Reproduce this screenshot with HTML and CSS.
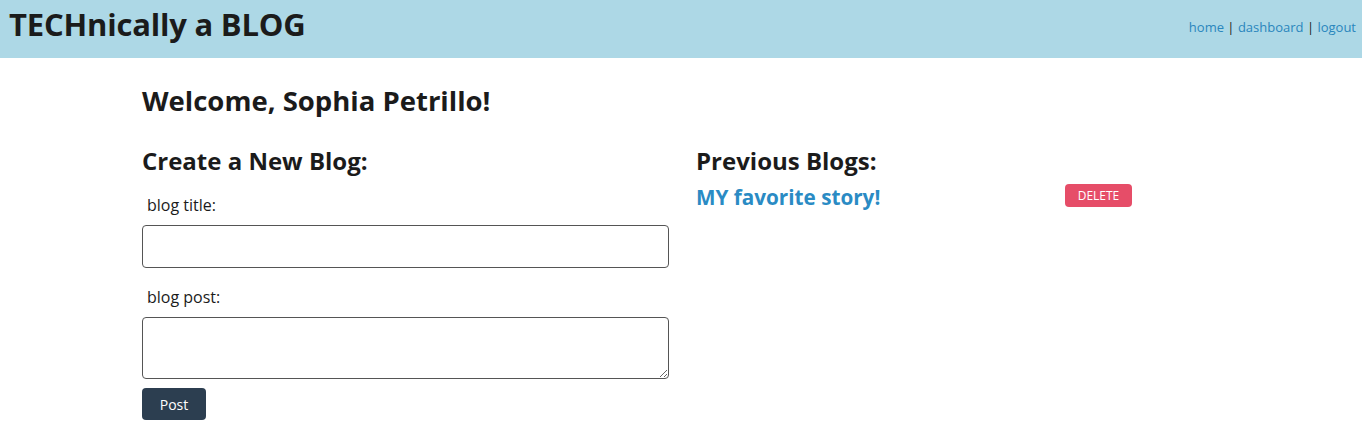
FILE: index.html
```html
<!DOCTYPE html>
<html>
<head>
<meta charset="utf-8">
<link rel="stylesheet" href="styles.css">
</head>
<body>
<header class="topbar">
  <h1 class="brand">TECHnically a BLOG</h1>
  <nav class="nav"><a href="#">home</a> | <a href="#">dashboard</a> | <a href="#">logout</a></nav>
</header>
<main class="container">
  <h2 class="welcome">Welcome, Sophia Petrillo!</h2>
  <div class="columns">
    <section class="col">
      <h3 class="sub">Create a New Blog:</h3>
      <form class="form">
        <label class="label">blog title:</label>
        <input class="field" type="text">
        <label class="label">blog post:</label>
        <textarea class="field area"></textarea>
        <button class="post" type="button">Post</button>
      </form>
    </section>
    <section class="col">
      <h3 class="sub">Previous Blogs:</h3>
      <div class="entry">
        <a class="entry-title" href="#">MY favorite story!</a>
        <button class="delete" type="button">DELETE</button>
      </div>
    </section>
  </div>
</main>
</body>
</html>
```
FILE: styles.css
```css
* { box-sizing: border-box; }
body {
  margin: 0;
  font-family: "Open Sans", "Noto Sans", sans-serif;
  color: #1b1b1b;
  background: #fff;
}
.topbar {
  height: 58px;
  background: #add8e6;
  display: flex;
  justify-content: space-between;
  align-items: flex-start;
  padding: 0 6px 0 9px;
}
.brand {
  margin: 0;
  font-size: 31px;
  font-weight: 700;
  line-height: 48px;
  letter-spacing: -0.2px;
}
.nav {
  padding-top: 18px;
  font-size: 13px;
  color: #1b1b1b;
}
.nav a { color: #2a86bd; text-decoration: none; }
.container {
  padding: 0 142px;
}
.welcome {
  margin: 25px 0 0;
  font-size: 27.5px;
  line-height: 36px;
  font-weight: 700;
}
.columns {
  display: grid;
  grid-template-columns: 527px 436px;
  column-gap: 27px;
  margin-top: 26px;
}
.sub {
  margin: 0;
  font-size: 24px;
  line-height: 32px;
  font-weight: 700;
}
.form {
  display: flex;
  flex-direction: column;
  align-items: flex-start;
  padding-top: 6px;
}
.label {
  font-size: 16px;
  line-height: 24px;
  padding-left: 5px;
  margin-top: 10px;
  margin-bottom: 8px;
}
.field {
  width: 100%;
  height: 43px;
  border: 1px solid #555;
  border-radius: 4px;
  font: inherit;
  margin-bottom: 7px;
}
.area {
  height: 62px;
  margin-bottom: 9px;
  resize: vertical;
}
.post {
  width: 64px;
  height: 32px;
  background: #2c3e50;
  color: #fff;
  border: 0;
  border-radius: 4px;
  font-family: inherit;
  font-size: 14px;
}
.entry {
  display: flex;
  justify-content: space-between;
  align-items: center;
  margin-top: 6px;
}
.entry-title {
  color: #2a8bc4;
  font-size: 20.7px;
  line-height: 28px;
  font-weight: 700;
  text-decoration: none;
}
.delete {
  width: 67px;
  height: 23px;
  background: #e64d68;
  color: #fff;
  border: 0;
  border-radius: 4px;
  font-family: inherit;
  font-size: 12px;
  padding: 0;
  margin-bottom: 4px;
}
```
